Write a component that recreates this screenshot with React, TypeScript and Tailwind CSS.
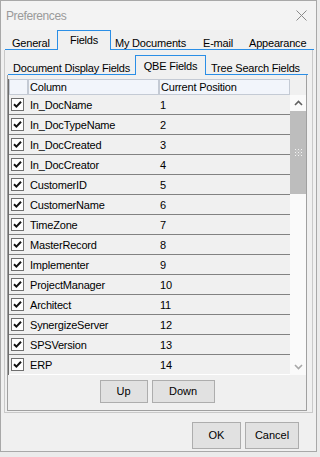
const outerTabs = [
  { label: "General", w: "w-[52px]", pl: "pl-[7px]" },
  { label: "Fields", selected: true },
  { label: "My Documents", w: "w-[86px]", pl: "pl-[4px]" },
  { label: "E-mail", w: "w-[44px]", pl: "pl-[6px]" },
  { label: "Appearance", w: "w-[73px]", pl: "pl-[8px]" },
];

const rows = [
  "In_DocName",
  "In_DocTypeName",
  "In_DocCreated",
  "In_DocCreator",
  "CustomerID",
  "CustomerName",
  "TimeZone",
  "MasterRecord",
  "Implementer",
  "ProjectManager",
  "Architect",
  "SynergizeServer",
  "SPSVersion",
  "ERP",
];

const CheckBox = () => (
  <div className="w-[13px] h-[13px] border border-[#6f6f6f] bg-white flex items-center justify-center">
    <svg width="9" height="9" viewBox="0 0 9 9">
      <path d="M1 4.2 L3.4 6.6 L8 1.8" fill="none" stroke="#111" strokeWidth="2" />
    </svg>
  </div>
);

const App = () => {
  return (
    <div
      className="w-[320px] h-[457px] bg-[#ebebeb] text-black"
      style={{ fontFamily: '"Liberation Sans", Arial, sans-serif' }}
    >
      <div className="w-[317px] h-[452px] border border-[#a8a8a8] bg-[#f0f0f0] flex flex-col">
        {/* Title bar */}
        <div className="h-[29px] flex items-center justify-between pl-[5px] pr-[9px] bg-[#f3f3f3]">
          <span className="text-[12px] tracking-[-0.4px] text-[#9a9a9a]">Preferences</span>
          <svg width="11" height="11" viewBox="0 0 11 11">
            <path d="M0.5 0.5 L10.5 10.5 M10.5 0.5 L0.5 10.5" stroke="#8a8a8a" strokeWidth="1" />
          </svg>
        </div>

        {/* Outer tabs */}
        <div className="h-[20px] ml-[4px] w-[309px] flex text-[11px] tracking-[-0.2px]">
          {outerTabs.map((t) =>
            t.selected ? (
              <div
                key={t.label}
                className="w-[54px] h-[20px] border border-b-0 border-[#2a8ee6] flex justify-center items-start pt-[3px] leading-[13px]"
              >
                {t.label}
              </div>
            ) : (
              <div
                key={t.label}
                className={`${t.w} ${t.pl} h-[20px] border-b border-[#2a8ee6] flex items-end leading-[11px]`}
              >
                {t.label}
              </div>
            )
          )}
          <div className="flex-1 h-[20px] border-b border-[#2a8ee6]" />
        </div>

        {/* Outer panel */}
        <div className="ml-[3px] w-[309px] h-[363px] border border-t-0 border-[#c9c9c9] flex flex-col">
          {/* Inner tabs */}
          <div className="mt-[5px] ml-[3px] w-[300px] h-[20px] flex text-[11px] tracking-[-0.2px]">
            <div className="w-[127px] pl-[5px] h-[20px] border-b border-[#2a8ee6] flex items-end leading-[11px] whitespace-nowrap">
              Document Display Fields
            </div>
            <div className="w-[71px] h-[20px] border border-b-0 border-[#2a8ee6] flex justify-center items-start pt-[4px] leading-[13px] whitespace-nowrap">
              QBE Fields
            </div>
            <div className="flex-1 pl-[5px] h-[20px] border-b border-[#2a8ee6] flex items-end leading-[11px] whitespace-nowrap">
              Tree Search Fields
            </div>
          </div>

          {/* Inner panel */}
          <div className="ml-[2px] w-[300px] h-[336px] border border-t-0 border-[#a0a0a0] flex flex-col">
            <div className="mt-[4px] flex">
              {/* Grid */}
              <div className="w-[282px] border-l border-[#6d6d6d] flex flex-col">
                <div className="h-[16px] flex text-[11px] tracking-[-0.2px]">
                  <div className="w-[19px] h-[16px] border border-[#c4cad4] bg-[#f2f5fb]" />
                  <div className="w-[131px] h-[16px] border border-[#c4cad4] bg-[#f2f5fb] pl-[1px] leading-[14px]">
                    Column
                  </div>
                  <div className="w-[131px] h-[16px] border border-[#c4cad4] bg-[#f2f5fb] pl-[1px] leading-[14px]">
                    Current Position
                  </div>
                </div>
                {rows.map((name, i) => (
                  <div
                    key={name}
                    className={`h-[20px] flex items-center text-[11px] tracking-[-0.2px] border-b ${
                      i === rows.length - 1 ? "border-white" : "border-[#828282]"
                    }`}
                  >
                    <div className="w-[19px] pl-[2px] flex items-center">
                      <CheckBox />
                    </div>
                    <div className="w-[131px] pl-[2px] leading-[14px]">{name}</div>
                    <div className="flex-1 pl-[1px] leading-[14px]">{i + 1}</div>
                  </div>
                ))}
              </div>

              {/* Scrollbar */}
              <div className="w-[16px] flex flex-col">
                <div className="h-[16px]" />
                <div className="h-[280px] bg-[#fafafa] flex flex-col items-center">
                  <div className="h-[16px] flex items-center justify-center">
                    <svg width="9" height="6" viewBox="0 0 9 6">
                      <path d="M1 5 L4.5 1.5 L8 5" fill="none" stroke="#606060" strokeWidth="1.6" />
                    </svg>
                  </div>
                  <div className="w-[16px] h-[83px] bg-[#bdbdbd] flex items-center justify-center">
                    <svg width="7" height="7" viewBox="0 0 7 7">
                      {[0, 3, 6].map((y) =>
                        [0, 3, 6].map((x) => (
                          <rect key={`${x}-${y}`} x={x} y={y} width="1" height="1" fill="#f4f4f4" />
                        ))
                      )}
                      {[1.5, 4.5].map((y) =>
                        [1.5, 4.5].map((x) => (
                          <rect key={`b${x}-${y}`} x={x} y={y} width="1" height="1" fill="#e0e0e0" />
                        ))
                      )}
                    </svg>
                  </div>
                  <div className="flex-1" />
                  <div className="h-[16px] flex items-center justify-center">
                    <svg width="9" height="6" viewBox="0 0 9 6">
                      <path d="M1 1 L4.5 4.5 L8 1" fill="none" stroke="#a8a8a8" strokeWidth="1.6" />
                    </svg>
                  </div>
                </div>
              </div>
            </div>

            {/* Up / Down */}
            <div className="mt-[5px] flex justify-center gap-[4px] text-[11px]">
              <button className="w-[48px] h-[23px] bg-[#e1e1e1] border border-[#adadad]">Up</button>
              <button className="w-[63px] h-[23px] bg-[#e1e1e1] border border-[#adadad]">Down</button>
            </div>
          </div>
        </div>

        {/* Footer */}
        <div className="mt-[9px] flex justify-end gap-[4px] pr-[17px] text-[11px]">
          <button className="w-[49px] h-[27px] bg-[#e1e1e1] border border-[#adadad]">OK</button>
          <button className="w-[54px] h-[27px] bg-[#e1e1e1] border border-[#adadad]">Cancel</button>
        </div>
      </div>
    </div>
  );
};

export default App;
